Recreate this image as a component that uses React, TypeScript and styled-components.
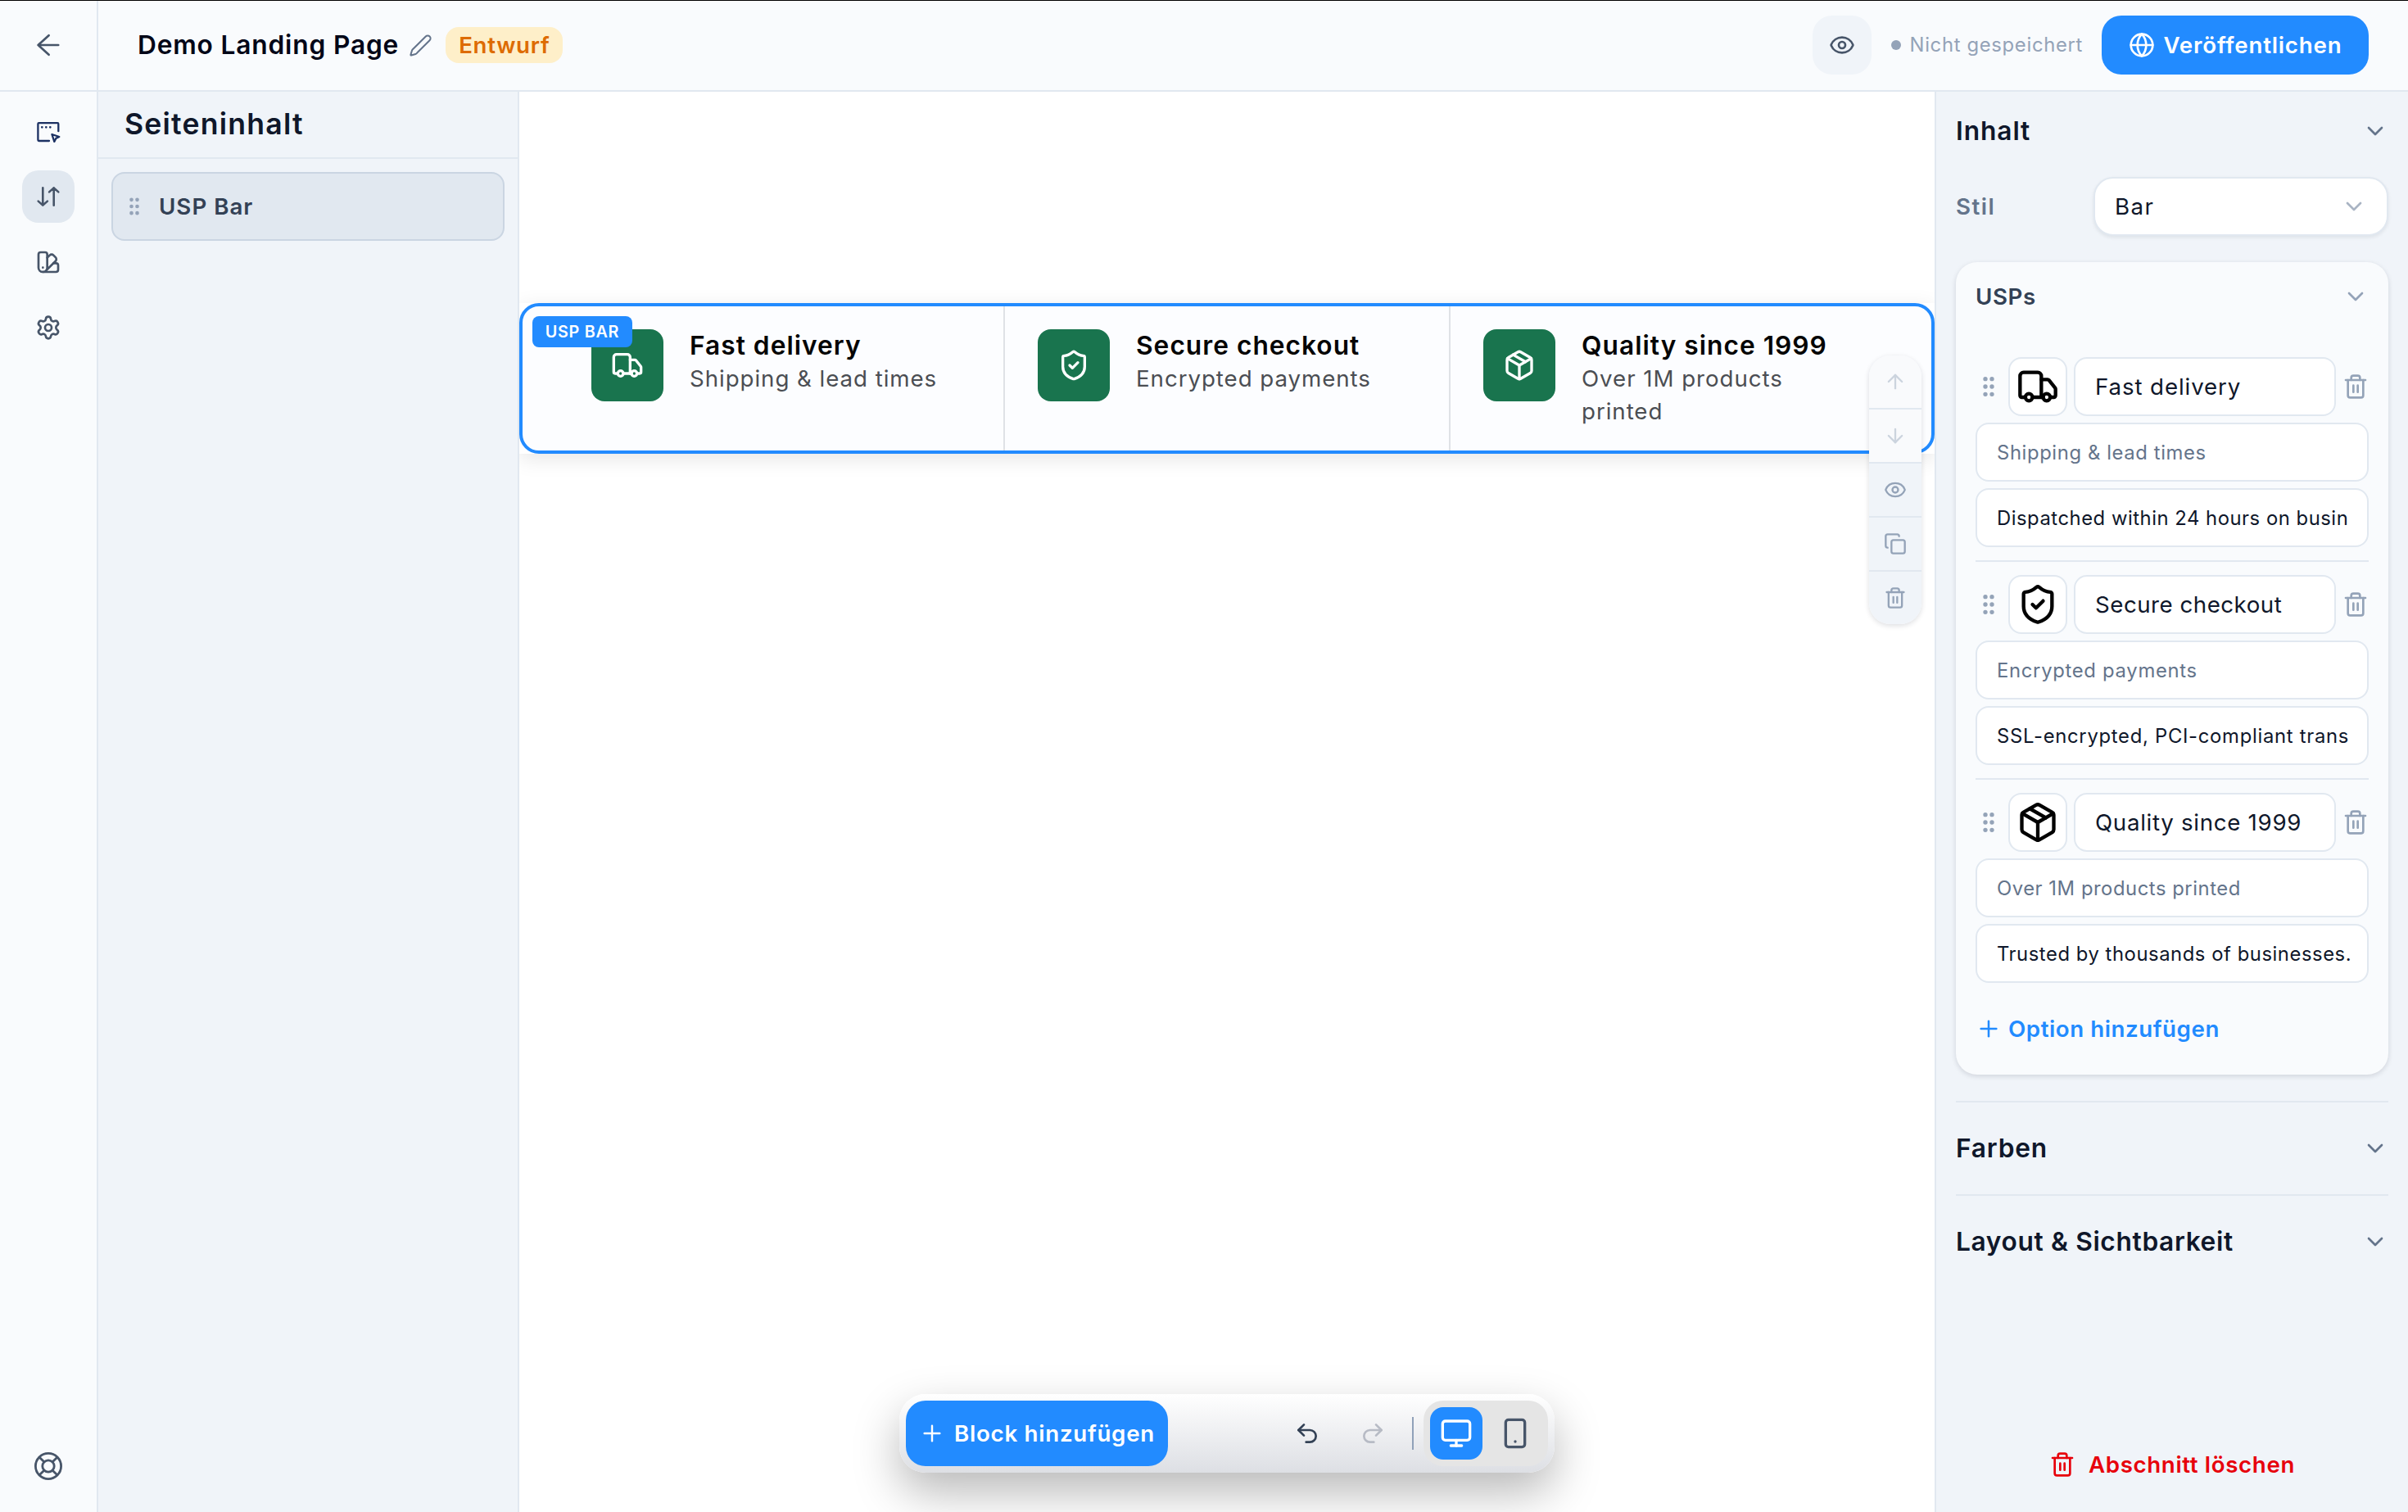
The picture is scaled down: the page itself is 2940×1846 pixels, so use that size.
import React from "react";
import styled, { createGlobalStyle } from "styled-components";
import {
  ArrowDown, ArrowUp, ChevronDown, Copy, Eye, Globe, GripVertical, Monitor, Package, Pen,
  Plus, Redo2, Settings, ShieldCheck, Smartphone, SwatchBook, Trash2, Truck, Undo2,
} from "lucide-react";

const color = {
  surface: "#f9fbfd",
  panel: "#f0f4f9",
  line: "#e1e8f0",
  blue: "#228bff",
  ink: "#0f172a",
  slate: "#64748b",
  mute: "#94a3b8",
  icon: "#475569",
};

const Global = createGlobalStyle`
  * { box-sizing: border-box; }
  body { margin: 0; background: #fff; font-family: Inter, "Liberation Sans", sans-serif; }
  svg { display: block; flex: none; }
`;

const Text = styled.span<{ $size: number; $weight?: number; $color?: string; $track?: number }>`
  font-size: ${(p) => p.$size}px;
  font-weight: ${(p) => p.$weight ?? 400};
  color: ${(p) => p.$color ?? color.ink};
  letter-spacing: ${(p) => p.$track ?? 0.029}em;
  line-height: 40px;
  white-space: nowrap;
`;

const Page = styled.div`
  width: 2940px;
  height: 1846px;
  display: flex;
  flex-direction: column;
  overflow: hidden;
`;

const Header = styled.header`
  height: 112px;
  flex: none;
  display: flex;
  background: ${color.surface};
  border-top: 1px solid #000;
  border-bottom: 2px solid ${color.line};
`;

const BackCell = styled.div`
  width: 120px;
  display: flex;
  align-items: center;
  justify-content: center;
  padding-bottom: 1px;
  border-right: 2px solid ${color.line};
  color: ${color.icon};
`;

const HeaderMain = styled.div`
  flex: 1;
  display: flex;
  align-items: center;
  justify-content: space-between;
  padding: 0 48px 1px;
`;

const TitleGroup = styled.div`
  display: flex;
  align-items: center;
  gap: 12px;
`;

const Draft = styled.div`
  width: 143px;
  height: 44px;
  display: flex;
  align-items: center;
  margin-left: 4px;
  padding-left: 16px;
  border-radius: 16px;
  background: #feefc9;
`;

const Actions = styled.div`
  display: flex;
  align-items: center;
  gap: 24px;
`;

const EyeButton = styled.div`
  width: 72px;
  height: 72px;
  display: grid;
  place-items: center;
  border-radius: 24px;
  background: ${color.panel};
  color: ${color.icon};
`;

const Status = styled.div`
  display: flex;
  align-items: center;
  gap: 11px;
  margin-right: -1px;
`;

const Dot = styled.i`
  width: 12px;
  height: 12px;
  border-radius: 50%;
  background: ${color.mute};
`;

const PrimaryButton = styled.div<{ $width: number; $height: number }>`
  width: ${(p) => p.$width}px;
  height: ${(p) => p.$height}px;
  display: flex;
  align-items: center;
  justify-content: center;
  gap: 11px;
  border-radius: 24px;
  background: ${color.blue};
  color: #fff;
`;

const Body = styled.div`
  flex: 1;
  min-height: 0;
  display: flex;
`;

const Rail = styled.nav`
  width: 120px;
  display: flex;
  flex-direction: column;
  align-items: center;
  justify-content: space-between;
  padding: 16px 0 24px;
  background: ${color.surface};
  border-right: 2px solid ${color.line};
`;

const RailGroup = styled.div`
  display: flex;
  flex-direction: column;
  gap: 16px;
`;

const RailButton = styled.div<{ $active?: boolean }>`
  width: 64px;
  height: 64px;
  display: grid;
  place-items: center;
  border-radius: 20px;
  background: ${(p) => (p.$active ? color.line : "transparent")};
  color: ${color.icon};
`;

const Outline = styled.aside`
  width: 514px;
  background: ${color.panel};
  border-right: 2px solid ${color.line};
`;

const OutlineHead = styled.div`
  height: 82px;
  display: flex;
  align-items: center;
  padding: 0 0 1px 32px;
  border-bottom: 2px solid ${color.line};
`;

const OutlineItem = styled.div`
  height: 84px;
  margin: 16px;
  display: flex;
  align-items: center;
  gap: 16px;
  padding-left: 12px;
  border: 2px solid #cad5e2;
  border-radius: 16px;
  background: ${color.line};
  color: ${color.mute};
`;

const Canvas = styled.main`
  position: relative;
  width: 1728px;
  padding-top: 258px;
  background: #fff;
  overflow: hidden;
`;

const BlockWrap = styled.section`
  position: relative;
  background: #fff;
  box-shadow: 0 6px 24px rgba(0, 0, 0, 0.1);
`;

const Block = styled.div`
  height: 184px;
  display: flex;
  padding: 0 44px;
  border: 4px solid ${color.blue};
  border-radius: 24px;
  background: #fcfdff;
`;

const UspColumn = styled.div`
  width: 544px;
  display: flex;
  gap: 32px;
  padding: 28px 39px 0 40px;
  border-left: 2px solid #dfe2e6;
  &:first-child { width: 543px; border-left: 0; }
`;

const UspIcon = styled.div`
  width: 88px;
  height: 88px;
  flex: none;
  display: grid;
  place-items: center;
  border-radius: 16px;
  background: #19744e;
  color: #fff;
`;

const UspCopy = styled.div`
  display: flex;
  flex-direction: column;
  ${Text} { white-space: normal; }
`;

const BlockTag = styled.div`
  position: absolute;
  left: 16px;
  top: 16px;
  width: 122px;
  height: 38px;
  display: flex;
  align-items: center;
  justify-content: center;
  border-radius: 8px;
  background: ${color.blue};
`;

const BlockTools = styled.div`
  position: absolute;
  right: 16px;
  top: 64px;
  width: 64px;
  border-radius: 26px;
  overflow: hidden;
  box-shadow: 0 2px 6px rgba(15, 23, 42, 0.14);
`;

const Tool = styled.div<{ $disabled?: boolean }>`
  height: 66px;
  display: grid;
  place-items: center;
  border-bottom: 2px solid ${color.line};
  background: ${(p) => (p.$disabled ? "#f9fafc" : color.panel)};
  color: ${(p) => (p.$disabled ? "#ccd4de" : color.mute)};
  &:last-child { height: 64px; border-bottom: 0; }
`;

const Dock = styled.div`
  position: absolute;
  left: 464px;
  bottom: 48px;
  width: 800px;
  height: 96px;
  display: flex;
  align-items: center;
  justify-content: space-between;
  padding: 8px;
  border-radius: 32px;
  background: linear-gradient(#ffffff, #dddfe4);
  box-shadow: 0 24px 56px rgba(0, 0, 0, 0.28);
`;

const DockRight = styled.div`
  display: flex;
  align-items: center;
`;

const History = styled.div<{ $color: string }>`
  width: 64px;
  height: 64px;
  margin-right: 16px;
  display: grid;
  place-items: center;
  color: ${(p) => p.$color};
`;

const Rule = styled.i`
  width: 2px;
  height: 40px;
  margin-right: 12px;
  background: #90a1b9;
`;

const Devices = styled.div`
  height: 80px;
  display: flex;
  gap: 8px;
  padding: 8px;
  border-radius: 24px;
  background: #e5e5e5;
`;

const Device = styled.div<{ $active?: boolean }>`
  width: 64px;
  height: 64px;
  display: grid;
  place-items: center;
  border-radius: 16px;
  background: ${(p) => (p.$active ? color.blue : "transparent")};
  color: ${(p) => (p.$active ? "#fff" : color.icon)};
`;

const Inspector = styled.aside`
  width: 578px;
  display: flex;
  flex-direction: column;
  padding: 0 24px 26px;
  background: ${color.panel};
  border-left: 2px solid ${color.line};
`;

const SectionHead = styled.div<{ $height: number; $ruled?: boolean }>`
  height: ${(p) => p.$height}px;
  display: flex;
  align-items: center;
  justify-content: space-between;
  border-top: ${(p) => (p.$ruled ? `2px solid ${color.line}` : "0")};
  color: ${color.slate};
`;

const Field = styled.div`
  display: flex;
  align-items: center;
  justify-content: space-between;
  margin: 8px 0 32px;
`;

const Select = styled.div`
  width: 360px;
  height: 72px;
  display: flex;
  align-items: center;
  justify-content: space-between;
  padding: 0 24px;
  border: 2px solid ${color.line};
  border-radius: 24px;
  background: #fff;
  box-shadow: 0 2px 4px rgba(15, 23, 42, 0.08);
  color: #a9b4c3;
`;

const Card = styled.div`
  height: 992px;
  margin-bottom: 32px;
  padding: 0 24px;
  border-radius: 26px;
  background: ${color.surface};
  box-shadow: 0 2px 6px rgba(15, 23, 42, 0.14);
`;

const CardHead = styled.div`
  height: 84px;
  margin-bottom: 32px;
  display: flex;
  align-items: center;
  justify-content: space-between;
  color: ${color.mute};
`;

const UspEditor = styled.div`
  display: flex;
  flex-direction: column;
  gap: 8px;
  padding-bottom: 16px;
  margin-bottom: 16px;
  border-bottom: 2px solid ${color.line};
  &:nth-last-child(2) { margin-bottom: 0; border-bottom: 0; }
`;

const EditorRow = styled.div`
  display: flex;
  align-items: center;
  gap: 8px;
  color: ${color.mute};
`;

const IconPick = styled.div`
  width: 72px;
  height: 72px;
  display: grid;
  place-items: center;
  border: 2px solid ${color.line};
  border-radius: 16px;
  background: #fff;
  color: #000;
`;

const Input = styled.div<{ $title?: boolean }>`
  flex: 1;
  height: 72px;
  min-height: 72px;
  display: flex;
  align-items: center;
  padding: ${(p) => (p.$title ? 0 : 1)}px 24px 0;
  border: 2px solid ${color.line};
  border-radius: 16px;
  background: #fff;
`;

const AddOption = styled.div`
  height: 80px;
  display: flex;
  align-items: center;
  gap: 8px;
  color: ${color.blue};
`;

const DeleteSection = styled.div`
  height: 64px;
  margin-top: auto;
  display: flex;
  align-items: center;
  justify-content: center;
  gap: 16px;
  color: #e7000b;
`;

const strokeProps = { fill: "none", stroke: "currentColor", strokeLinecap: "round", strokeLinejoin: "round" } as const;

const BackIcon = () => (
  <svg width="32" height="32" viewBox="0 0 32 32" {...strokeProps} strokeWidth="2.7">
    <path d="M28.2 16H3.6M16.6 4.2 3.6 16l13 11.8" />
  </svg>
);

const WindowCursorIcon = () => (
  <svg width="32" height="32" viewBox="0 0 32 32" {...strokeProps} stroke="#1c3163" strokeWidth="2.3">
    <path d="M28.3 16.2V7.2a1 1 0 0 0-1-1H4.400a1 1 0 0 0-1 1V26.600a1.400 1.400 0 0 0 1.400 1.400H17" />
    <path d="m20.400 20 8.900 3-4 1.900-2 4z" />
    <path d="M8.300 11.300h.01M13.300 11.300h.01M18.300 11.300h.01" strokeWidth="2.700" />
  </svg>
);

const SortIcon = () => (
  <svg width="32" height="32" viewBox="0 0 32 32" {...strokeProps} strokeWidth="2.6">
    <path d="M9.300 5.200v21.400M3.700 21.600l5.600 5 5.600-5M22.700 26.800V5.400M17.100 10.400l5.600-5 5.600 5" />
  </svg>
);

const BuoyIcon = () => (
  <svg width="36" height="36" viewBox="0 0 36 36" {...strokeProps} strokeWidth="2.8">
    <circle cx="18" cy="18" r="15.600" />
    <circle cx="18" cy="18" r="7.200" />
    <path d="m7.200 7.200 5.600 5.600M23.200 12.800l5.600-5.600M23.200 23.200l5.600 5.600M12.800 23.200l-5.600 5.600" />
  </svg>
);

const usps = [
  { icon: Truck, title: "Fast delivery", sub: "Shipping & lead times", note: "Dispatched within 24 hours on busin", t: [0.032, 0.026, 0.0225] },
  { icon: ShieldCheck, title: "Secure checkout", sub: "Encrypted payments", note: "SSL-encrypted, PCI-compliant trans", t: [0.018, 0.03, 0.0305] },
  { icon: Package, title: "Quality since 1999", sub: "Over 1M products printed", note: "Trusted by thousands of businesses.", t: [0.025, 0.023, 0.0235] },
];

export default function App() {
  return (
    <Page>
      <Global />
      <Header>
        <BackCell><BackIcon /></BackCell>
        <HeaderMain>
          <TitleGroup>
            <Text $size={31.7} $weight={600} $color="#020617" $track={0.026}>Demo Landing Page</Text>
            <Pen size={29} strokeWidth={1.7} color={color.slate} />
            <Draft><Text $size={27.7} $weight={600} $color="#dd6b00" $track={0.025}>Entwurf</Text></Draft>
          </TitleGroup>
          <Actions>
            <EyeButton><Eye size={32} strokeWidth={2} /></EyeButton>
            <Status>
              <Dot />
              <Text $size={23.8} $color={color.mute}>Nicht gespeichert</Text>
            </Status>
            <PrimaryButton $width={326} $height={72}>
              <Globe size={32} strokeWidth={2} />
              <Text $size={27.7} $weight={600} $color="#fff">Veröffentlichen</Text>
            </PrimaryButton>
          </Actions>
        </HeaderMain>
      </Header>
      <Body>
        <Rail>
          <RailGroup>
            <RailButton><WindowCursorIcon /></RailButton>
            <RailButton $active><SortIcon /></RailButton>
            <RailButton><SwatchBook size={32} strokeWidth={2} /></RailButton>
            <RailButton><Settings size={32} strokeWidth={2} /></RailButton>
          </RailGroup>
          <RailButton><BuoyIcon /></RailButton>
        </Rail>
        <Outline>
          <OutlineHead><Text $size={35.6} $weight={600} $track={0.034}>Seiteninhalt</Text></OutlineHead>
          <OutlineItem>
            <GripVertical size={28} />
            <Text $size={27.7} $weight={600} $color="#334155" $track={0.036}>USP Bar</Text>
          </OutlineItem>
        </Outline>
        <Canvas>
          <BlockWrap>
            <Block>
              {usps.map(({ icon: Icon, title, sub }) => (
                <UspColumn key={title}>
                  <UspIcon><Icon size={40} /></UspIcon>
                  <UspCopy>
                    <Text $size={31.7} $weight={600} $color="#050505" $track={0.032}>{title}</Text>
                    <Text $size={27.7} $color="#4b4e53" $track={0.034}>{sub}</Text>
                  </UspCopy>
                </UspColumn>
              ))}
            </Block>
            <BlockTag><Text $size={19.8} $weight={600} $color="#fff" $track={0.036}>USP BAR</Text></BlockTag>
            <BlockTools>
              <Tool $disabled><ArrowUp size={28} strokeWidth={2} /></Tool>
              <Tool $disabled><ArrowDown size={28} strokeWidth={2} /></Tool>
              <Tool><Eye size={28} strokeWidth={2} /></Tool>
              <Tool><Copy size={28} strokeWidth={2} /></Tool>
              <Tool><Trash2 size={28} strokeWidth={2} /></Tool>
            </BlockTools>
          </BlockWrap>
          <Dock>
            <PrimaryButton $width={320} $height={80}>
              <Plus size={32} strokeWidth={1.8} />
              <Text $size={27.7} $weight={600} $color="#fff" $track={0.026}>Block hinzufügen</Text>
            </PrimaryButton>
            <DockRight>
              <History $color="#334155"><Undo2 size={32} /></History>
              <History $color="#b7bbc5"><Redo2 size={32} /></History>
              <Rule />
              <Devices>
                <Device $active><Monitor size={40} /></Device>
                <Device><Smartphone size={40} /></Device>
              </Devices>
            </DockRight>
          </Dock>
        </Canvas>
        <Inspector>
          <SectionHead $height={96}>
            <Text $size={31.7} $weight={600}>Inhalt</Text>
            <ChevronDown size={32} strokeWidth={2} />
          </SectionHead>
          <Field>
            <Text $size={27.7} $weight={600} $color={color.slate} $track={0.055}>Stil</Text>
            <Select>
              <Text $size={27.7} $track={0.05}>Bar</Text>
              <ChevronDown size={32} strokeWidth={2} />
            </Select>
          </Field>
          <Card>
            <CardHead>
              <Text $size={27.7} $weight={600} $color="#334155" $track={0.022}>USPs</Text>
              <ChevronDown size={32} strokeWidth={2} />
            </CardHead>
            {usps.map(({ icon: Icon, title, sub, note, t }) => (
              <UspEditor key={title}>
                <EditorRow>
                  <GripVertical size={32} />
                  <IconPick><Icon size={52} /></IconPick>
                  <Input $title><Text $size={27.7} $track={t[0]}>{title}</Text></Input>
                  <Trash2 size={32} strokeWidth={2} />
                </EditorRow>
                <Input><Text $size={23.8} $color={color.slate} $track={t[1]}>{sub}</Text></Input>
                <Input><Text $size={23.8} $track={t[2]}>{note}</Text></Input>
              </UspEditor>
            ))}
            <AddOption>
              <Plus size={32} strokeWidth={1.9} />
              <Text $size={27.7} $weight={600} $color={color.blue} $track={0.02}>Option hinzufügen</Text>
            </AddOption>
          </Card>
          <SectionHead $height={114} $ruled>
            <Text $size={31.7} $weight={600} $track={0.025}>Farben</Text>
            <ChevronDown size={32} strokeWidth={2} />
          </SectionHead>
          <SectionHead $height={114} $ruled>
            <Text $size={31.7} $weight={600} $track={0.02}>Layout &amp; Sichtbarkeit</Text>
            <ChevronDown size={32} strokeWidth={2} />
          </SectionHead>
          <DeleteSection>
            <Trash2 size={32} strokeWidth={2} />
            <Text $size={27.7} $weight={600} $color="#e7000b" $track={0.023}>Abschnitt löschen</Text>
          </DeleteSection>
        </Inspector>
      </Body>
    </Page>
  );
}
